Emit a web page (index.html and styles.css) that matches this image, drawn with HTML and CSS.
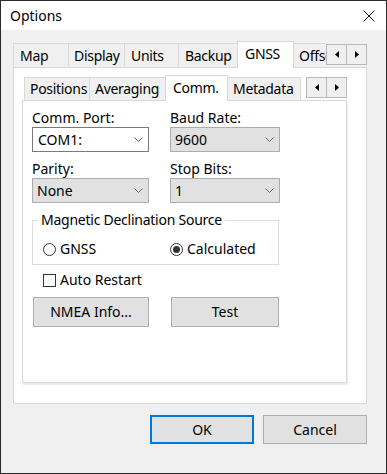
FILE: index.html
```html
<!DOCTYPE html>
<html>
<head>
<meta charset="utf-8">
<link rel="stylesheet" href="styles.css">
</head>
<body>
<div class="window">
  <div class="titlebar">
    <span class="title">Options</span>
    <svg class="close" width="12" height="12" viewBox="0 0 12 12"><path d="M0.5 0.5 L11.5 11.5 M11.5 0.5 L0.5 11.5" stroke="#111" stroke-width="1" fill="none"/></svg>
  </div>
  <div class="body">
    <div class="strip">
      <div class="tabs">
        <div class="tab t-map">Map</div>
        <div class="tab t-display">Display</div>
        <div class="tab t-units">Units</div>
        <div class="tab t-backup">Backup</div>
        <div class="tab t-gnss sel">GNSS</div>
        <div class="tab t-offs">Offsets</div>
      </div>
      <div class="arrows">
        <div class="arr"><svg width="4" height="7" viewBox="0 0 4 7"><path d="M4 0 L0 3.5 L4 7 Z" fill="#000"/></svg></div>
        <div class="arr"><svg width="4" height="7" viewBox="0 0 4 7"><path d="M0 0 L4 3.5 L0 7 Z" fill="#000"/></svg></div>
      </div>
    </div>
    <div class="panel outer-panel">
      <div class="strip inner-strip">
        <div class="tabs inner-tabs">
          <div class="tab i-pos">Positions</div>
          <div class="tab i-avg">Averaging</div>
          <div class="tab i-comm sel">Comm.</div>
          <div class="tab i-meta">Metadata</div>
        </div>
        <div class="arrows inner-arrows">
          <div class="arr"><svg width="4" height="7" viewBox="0 0 4 7"><path d="M4 0 L0 3.5 L4 7 Z" fill="#000"/></svg></div>
          <div class="arr"><svg width="4" height="7" viewBox="0 0 4 7"><path d="M0 0 L4 3.5 L0 7 Z" fill="#000"/></svg></div>
        </div>
      </div>
      <div class="panel inner-panel">
        <div class="fields">
          <div class="field">
            <div class="label">Comm. Port:</div>
            <div class="combo white"><span>COM1:</span><svg class="chev" width="9" height="5" viewBox="0 0 9 5"><path d="M0.5 0.5 L4.5 4.5 L8.5 0.5" stroke="#666" fill="none"/></svg></div>
          </div>
          <div class="field">
            <div class="label">Baud Rate:</div>
            <div class="combo"><span>9600</span><svg class="chev" width="9" height="5" viewBox="0 0 9 5"><path d="M0.5 0.5 L4.5 4.5 L8.5 0.5" stroke="#666" fill="none"/></svg></div>
          </div>
          <div class="field">
            <div class="label">Parity:</div>
            <div class="combo"><span>None</span><svg class="chev" width="9" height="5" viewBox="0 0 9 5"><path d="M0.5 0.5 L4.5 4.5 L8.5 0.5" stroke="#666" fill="none"/></svg></div>
          </div>
          <div class="field">
            <div class="label">Stop Bits:</div>
            <div class="combo"><span>1</span><svg class="chev" width="9" height="5" viewBox="0 0 9 5"><path d="M0.5 0.5 L4.5 4.5 L8.5 0.5" stroke="#666" fill="none"/></svg></div>
          </div>
        </div>
        <fieldset class="group">
          <legend>Magnetic Declination Source</legend>
          <div class="radios">
            <div class="radio"><span class="circle"></span><span>GNSS</span></div>
            <div class="radio"><span class="circle on"></span><span>Calculated</span></div>
          </div>
        </fieldset>
        <div class="check"><span class="box"></span><span>Auto Restart</span></div>
        <div class="btnrow">
          <div class="btn b-nmea">NMEA Info...</div>
          <div class="btn b-test">Test</div>
        </div>
      </div>
    </div>
    <div class="footer">
      <div class="btn b-ok">OK</div>
      <div class="btn b-cancel">Cancel</div>
    </div>
  </div>
</div>
</body>
</html>
```
FILE: styles.css
```css
* { box-sizing: border-box; }
html, body { margin: 0; padding: 0; }
body {
  font-family: "Noto Sans", "Open Sans", sans-serif;
  font-size: 14px;
  line-height: 16px;
  color: #000;
  background: #fff;
}
.window {
  width: 387px;
  height: 474px;
  border: 1px solid #2b2b2b;
  background: #f0f0f0;
  display: flex;
  flex-direction: column;
}
.titlebar {
  height: 29px;
  background: #fff;
  display: flex;
  align-items: center;
  justify-content: space-between;
  padding: 0 11px 0 9px;
  flex: none;
}
.title { font-size: 14px; }
.close { display: block; }
.body {
  padding: 11px 19px 0 12px;
}
.strip {
  display: flex;
  height: 27px;
  margin-bottom: -1px;
  position: relative;
  z-index: 1;
}
.tabs {
  flex: 1;
  display: flex;
  align-items: flex-start;
  overflow: hidden;
  height: 27px;
}
.tab {
  flex: none;
  margin-top: 2px;
  height: 24px;
  border: 1px solid #d9d9d9;
  border-bottom: none;
  background: #f0f0f0;
  margin-right: -1px;
  padding-left: 6px;
  white-space: nowrap;
  overflow: hidden;
  display: flex;
  align-items: center;
  letter-spacing: -0.3px;
}
.tab.sel {
  margin-top: 0;
  height: 27px;
  background: #fff;
  position: relative;
  z-index: 2;
  padding-bottom: 2px;
}
.t-map { width: 56px; }
.t-display { width: 57px; padding-left: 5px; }
.t-units { width: 55px; }
.t-backup { width: 60px; }
.t-gnss { width: 57px; padding-left: 7px; }
.t-offs { width: 60px; padding-left: 5px; }
.arrows {
  flex: none;
  display: flex;
  margin-top: 3px;
  height: 21px;
}
.arr {
  width: 21px;
  height: 21px;
  border: 1px solid #b8b8b8;
  background: #f0f0f0;
  margin-left: -1px;
  display: flex;
  align-items: center;
  justify-content: center;
}
.arr:first-child { margin-left: 0; }
.panel {
  background: #fff;
  border: 1px solid #d9d9d9;
}
.outer-panel {
  height: 337px;
  padding: 7px 19px 0 8px;
}
.inner-strip { height: 26px; }
.inner-tabs { height: 26px; padding-left: 2px; }
.inner-tabs .tab { margin-top: 2px; height: 23px; padding-left: 5px; }
.inner-tabs .tab.sel { margin-top: 0; height: 26px; padding-left: 7px; }
.i-pos { width: 66px; }
.i-avg { width: 77px; }
.i-comm { width: 63px; }
.i-meta { width: 74px; }
.inner-arrows { margin-top: 2px; }
.inner-panel {
  height: 283px;
  padding: 9px 0 0 9px;
  box-shadow: 1px 2px 0 #ececec;
}
.fields {
  display: grid;
  grid-template-columns: 117px 110px;
  column-gap: 21px;
  row-gap: 9px;
}
.label { height: 16px; margin-bottom: 1px; white-space: nowrap; }
.combo {
  height: 25px;
  border: 1px solid #adadad;
  background: #e1e1e1;
  display: flex;
  align-items: center;
  justify-content: space-between;
  padding: 0 5px 0 4px;
}
.combo.white { background: #fff; border-color: #7a7a7a; padding-left: 5px; }
.chev { display: block; }
.group {
  margin: 9px 0 0 0;
  width: 247px;
  border: 1px solid #dcdcdc;
  padding: 13px 0 7px 10px;
  min-width: 0;
}
.group legend {
  padding: 0 3px;
  margin-left: -5px;
  line-height: 16px;
  height: 16px;
  letter-spacing: -0.25px;
}
.radios {
  display: grid;
  grid-template-columns: 127px auto;
}
.radio, .check {
  display: flex;
  align-items: center;
  height: 16px;
  gap: 4px;
}
.circle {
  width: 13px;
  height: 13px;
  border: 1px solid #333;
  border-radius: 50%;
  display: flex;
  align-items: center;
  justify-content: center;
  background: #fff;
}
.circle.on::after {
  content: "";
  width: 7px;
  height: 7px;
  border-radius: 50%;
  background: #333;
}
.check { margin: 7px 0 0 11px; }
.box {
  width: 13px;
  height: 13px;
  border: 1px solid #333;
  background: #fff;
}
.btnrow {
  display: flex;
  margin-top: 9px;
}
.btn {
  height: 30px;
  border: 1px solid #adadad;
  background: #e1e1e1;
  display: flex;
  align-items: center;
  justify-content: center;
}
.b-nmea { width: 116px; margin-left: 1px; }
.b-test { width: 108px; margin-left: 22px; }
.footer {
  display: flex;
  justify-content: flex-end;
  gap: 9px;
  margin-top: 11px;
}
.b-ok, .b-cancel { width: 104px; height: 29px; }
.b-ok { border: 2px solid #0078d7; }
```
